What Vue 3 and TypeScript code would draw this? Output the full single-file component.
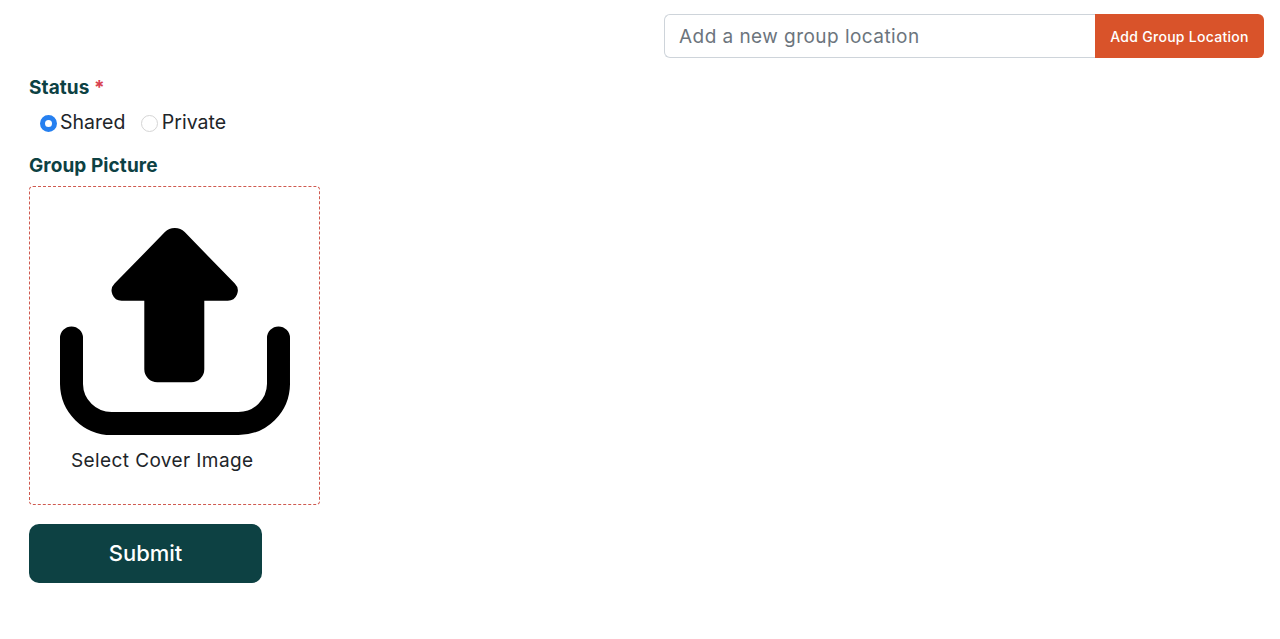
<script setup lang="ts">
import { ref } from 'vue'

const status = ref<'shared' | 'private'>('shared')
</script>

<template>
  <div class="page">
    <div class="top">
      <div class="group">
        <input class="loc" type="text" placeholder="Add a new group location" />
        <button class="add" type="button">Add Group Location</button>
      </div>
    </div>

    <form class="form" @submit.prevent>
      <div class="label status-label">Status <span class="req">*</span></div>
      <div class="radios">
        <label class="radio">
          <input v-model="status" type="radio" value="shared" />
          <span>Shared</span>
        </label>
        <label class="radio">
          <input v-model="status" type="radio" value="private" />
          <span>Private</span>
        </label>
      </div>

      <div class="label pic-label">Group Picture</div>
      <div class="drop">
        <svg class="icon" width="230" height="208" viewBox="0 0 230 208" aria-hidden="true">
          <path
            d="M104.9 4.1A14 14 0 0 1 124.7 4.1L174.8 55.6A10 10 0 0 1 167.7 72.7H144.3V141.3A13 13 0 0 1 131.3 154.3H97.3A13 13 0 0 1 84.3 141.3V72.7H61.7A10 10 0 0 1 54.6 55.6Z"
            fill="#000"
          />
          <path
            d="M11.5 110V156A40 40 0 0 0 51.5 195.5H178.5A40 40 0 0 0 218.5 156V110"
            fill="none"
            stroke="#000"
            stroke-width="23"
            stroke-linecap="round"
          />
        </svg>
        <div class="cover">Select Cover Image</div>
      </div>

      <button class="submit" type="submit">Submit</button>
    </form>
  </div>
</template>

<style>
html,
body {
  margin: 0;
  background: #fff;
}
</style>

<style scoped>
.page {
  box-sizing: border-box;
  height: 639px;
  padding: 14px 16px 0 29px;
  font-family: Inter, "Noto Sans", "Liberation Sans", sans-serif;
  color: #212529;
  overflow: hidden;
}
.top {
  display: flex;
  justify-content: flex-end;
}
.group {
  display: flex;
  width: 600px;
  height: 44px;
}
.loc {
  box-sizing: border-box;
  flex: 1;
  min-width: 0;
  height: 100%;
  padding: 0 14px;
  border: 1px solid #ced4da;
  border-right: 0;
  border-radius: 6px 0 0 6px;
  font: 400 19px Inter, sans-serif;
  letter-spacing: 0.45px;
  outline: none;
}
.loc::placeholder {
  color: #6c757d;
  opacity: 1;
}
.add {
  width: 169px;
  border: 0;
  padding: 0;
  border-radius: 0 6px 6px 0;
  background: #d9532a;
  color: #fff;
  font: 500 14px Inter, sans-serif;
  letter-spacing: 0.28px;
}
.form {
  display: flex;
  flex-direction: column;
  align-items: flex-start;
}
.label {
  font-size: 19px;
  font-weight: 700;
  letter-spacing: 0.08px;
  line-height: 24px;
  color: #0d4143;
}
.status-label {
  margin-top: 18px;
}
.req {
  color: #d8404f;
}
.radios {
  display: flex;
  gap: 16px;
  margin: 10px 0 0 10.5px;
  height: 24px;
}
.radio {
  display: flex;
  align-items: center;
  gap: 3.5px;
  font-size: 19.5px;
  line-height: 24px;
  color: #212529;
}
.radio input {
  appearance: none;
  box-sizing: border-box;
  width: 17px;
  height: 17px;
  margin: 2px 0 0;
  border: 1px solid #d5d5d5;
  border-radius: 50%;
  background: #fff;
}
.radio input:checked {
  border: 5.5px solid #2680f0;
}
.pic-label {
  margin-top: 20px;
}
.drop {
  box-sizing: border-box;
  width: 291px;
  height: 319px;
  margin-top: 8px;
  padding: 41px 0 0 30px;
  border: 1px dashed #cf5a50;
  border-radius: 4px;
}
.icon {
  display: block;
}
.cover {
  margin: 12px 0 0 11px;
  font-size: 19px;
  letter-spacing: 0.4px;
  line-height: 26px;
  color: #212529;
}
.submit {
  width: 233px;
  height: 59px;
  margin-top: 19px;
  padding: 0 0 2px;
  border: 0;
  border-radius: 10px;
  background: #0d4143;
  color: #fff;
  font: 500 22px Inter, sans-serif;
}
</style>
